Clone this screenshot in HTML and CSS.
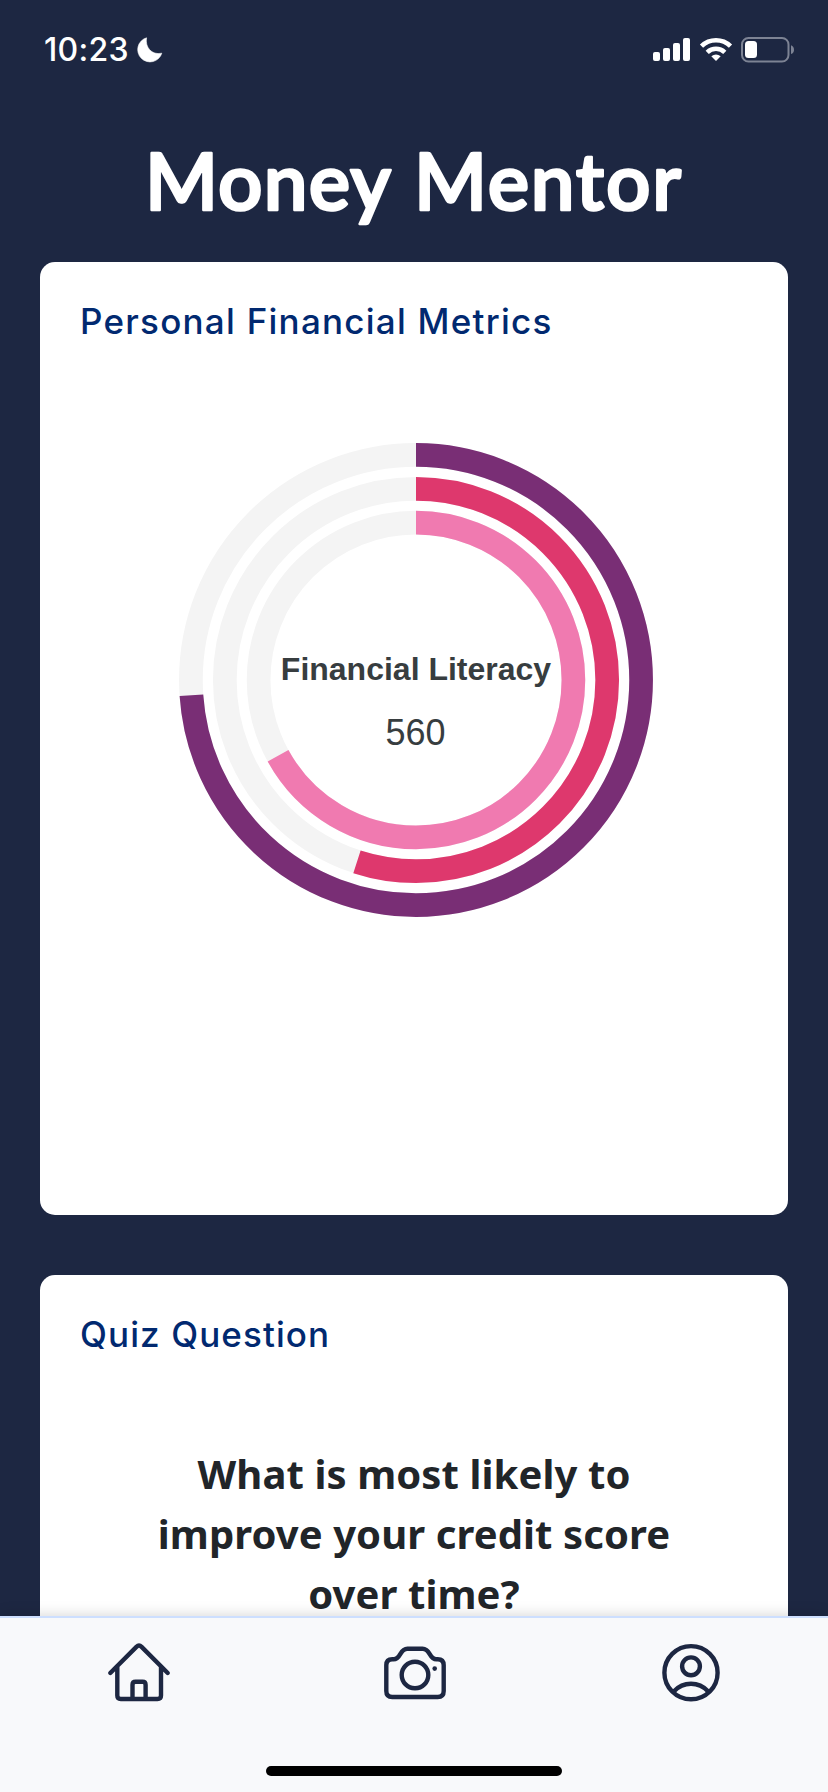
FILE: index.html
```html
<!DOCTYPE html>
<html lang="en">
<head>
<meta charset="utf-8">
<title>Money Mentor</title>
<link rel="stylesheet" href="styles.css">
</head>
<body>
<div class="app">
  <header class="status">
    <span class="clock">10:23</span>
    <svg class="moon" width="26" height="26" viewBox="0 0 26 26"><path d="M9.6.8C7.8 9.8 14.5 18.6 24.8 16.200A12.300 12.300 0 1 1 9.600.800Z" fill="#fff" stroke="#fff" stroke-width=".6" stroke-linejoin="round"/></svg>
    <svg class="signals" width="144" height="26" viewBox="0 0 144 26">
      <g fill="#fff">
        <rect x="2" y="15" width="7" height="9" rx="2"/>
        <rect x="12" y="11" width="7" height="13" rx="2"/>
        <rect x="22" y="6" width="7" height="18" rx="2"/>
        <rect x="32" y="1" width="7" height="23" rx="2"/>
        <path d="M65 24 60.300 19.300Q65 15.700 69.700 19.300Z"/>
      </g>
      <g fill="none" stroke="#fff" stroke-width="4.600">
        <path d="M50.500 9.100A21 21 0 0 1 79.500 9.100"/>
        <path d="M56.200 15.300A12.800 12.800 0 0 1 73.800 15.300"/>
      </g>
      <rect x="91" y="1" width="46.500" height="23.500" rx="6.500" fill="none" stroke="#7d8394" stroke-width="2"/>
      <rect x="94" y="4" width="12" height="17" rx="3.500" fill="#fff"/>
      <path d="M140 8.300Q143 9.600 143 12.700T140 17.100Z" fill="#7d8394"/>
    </svg>
  </header>
  <main class="content">
    <svg class="title" width="828" height="162" viewBox="0 0 828 162" role="heading" aria-label="Money Mentor">
      <text x="145" y="110" textLength="246" lengthAdjust="spacing">Money</text>
      <text x="414" y="110" textLength="267" lengthAdjust="spacing">Mentor</text>
    </svg>
    <section class="card card-metrics">
      <h2 class="card-title metrics-title">Personal Financial Metrics</h2>
      <svg class="chart" width="748" height="500" viewBox="40 430 748 500">
        <g fill="none" stroke="#f4f4f4" stroke-width="23.700">
          <circle cx="416" cy="680" r="225.100"/><circle cx="416" cy="680" r="191.200"/><circle cx="416" cy="680" r="157.400"/>
        </g>
        <g fill="none" stroke-width="23.700" transform="rotate(-90 416 680)">
          <circle cx="416" cy="680" r="225.100" pathLength="360" stroke="#792e75" stroke-dasharray="266.100 360"/>
          <circle cx="416" cy="680" r="191.200" pathLength="360" stroke="#de386d" stroke-dasharray="198 360"/>
          <circle cx="416" cy="680" r="157.400" pathLength="360" stroke="#f07ab0" stroke-dasharray="241.200 360"/>
        </g>
        <text class="chart-label" x="416" y="680">Financial Literacy</text>
        <text class="chart-value" x="415.500" y="744.500">560</text>
      </svg>
    </section>
    <section class="card card-quiz">
      <h2 class="card-title quiz-title">Quiz Question</h2>
      <p class="question">What is most likely to<br>improve your credit score<br>over time?</p>
    </section>
  </main>
  <nav class="tabs">
    <div class="tab-row">
      <svg class="icon" width="70" height="70" viewBox="103 1638 70 70">
        <path d="M110.300 1673 136.400 1646.900Q139 1644.300 141.600 1646.900L167.700 1673M117.300 1667V1695.500Q117.300 1699 120.800 1699H157.500Q161 1699 161 1695.500V1667M132.500 1699V1684.800Q132.500 1681.800 135.500 1681.800H142.600Q145.600 1681.800 145.600 1684.800V1699"/>
      </svg>
      <svg class="icon" width="70" height="70" viewBox="379 1638 70 70">
        <path d="M386.300 1665.300Q386.300 1659.300 392.300 1659.300H393.500C401.500 1659.300 399 1648.800 407.500 1648.800H422.500C431 1648.800 428.500 1659.300 436.500 1659.300H437.700Q443.700 1659.300 443.700 1665.300V1691Q443.700 1697 437.700 1697H392.300Q386.300 1697 386.300 1691Z"/>
        <circle cx="415" cy="1675" r="13.300"/>
        <circle class="dot" cx="434.700" cy="1668.600" r="2.300"/>
      </svg>
      <svg class="icon" width="70" height="70" viewBox="655 1638 70 70">
        <circle cx="691" cy="1672.700" r="26.600"/>
        <circle cx="691" cy="1666.300" r="8.900"/>
        <path d="M674 1691.200Q681 1683.700 691 1683.700T708 1691.200"/>
      </svg>
    </div>
    <div class="home-bar"></div>
  </nav>
</div>
</body>
</html>
```
FILE: styles.css
```css
* { box-sizing: border-box; }
body { margin: 0; background: #1d2742; }
.app {
  display: flex;
  flex-direction: column;
  width: 828px;
  height: 1792px;
  overflow: hidden;
  background: #1d2742;
}
.status {
  flex: none;
  display: flex;
  align-items: flex-start;
  height: 100px;
  padding: 37px 33px 0 44px;
  color: #fff;
}
.clock {
  width: 93px;
  font: 500 32px/26px Inter, sans-serif;
  letter-spacing: .3px;
  white-space: nowrap;
}
.signals { margin-left: auto; }
.content {
  flex: 1;
  min-height: 0;
  overflow: hidden;
}
.title {
  display: block;
  fill: #fff;
  stroke: #fff;
  stroke-width: 2.5px;
  stroke-linejoin: round;
  font: 600 78px Lato, sans-serif;
}
.card {
  margin: 0 40px;
  background: #fff;
  border-radius: 15px;
}
.card-metrics {
  height: 953px;
  margin-bottom: 60px;
  padding-top: 32px;
}
.card-quiz {
  height: 700px;
  padding-top: 32px;
}
.card-title {
  margin: 0 40px;
  color: #012970;
  font: 500 35px/54px Inter, sans-serif;
  letter-spacing: 1.25px;
  white-space: nowrap;
}
.quiz-title { letter-spacing: 1.1px; }
.chart {
  display: block;
  margin-top: 82px;
}
.chart text {
  fill: #373d3f;
  font-family: "Liberation Sans", Arial, sans-serif;
  text-anchor: middle;
}
.chart .chart-label { font-size: 32px; font-weight: 700; }
.chart .chart-value { font-size: 36px; }
.question {
  margin: 83px 0 0;
  color: #212529;
  font: 700 40px/60px "Noto Sans", sans-serif;
  letter-spacing: .1px;
  text-align: center;
}
.tabs {
  position: relative;
  flex: none;
  display: flex;
  flex-direction: column;
  align-items: center;
  justify-content: space-between;
  height: 176px;
  padding: 20px 0 16px;
  border-top: 2px solid #cddfff;
  background: #f8f9fb;
  box-shadow: 0 0 14px rgba(0, 0, 0, .18);
}
.tab-row {
  display: grid;
  grid-template-columns: repeat(3, 1fr);
  justify-items: center;
  width: 828px;
}
.icon {
  fill: none;
  stroke: #1d2742;
  stroke-width: 4.4;
  stroke-linecap: round;
  stroke-linejoin: round;
}
.icon .dot { fill: #1d2742; stroke: none; }
.home-bar {
  width: 296px;
  height: 10px;
  border-radius: 5px;
  background: #000;
}
```
